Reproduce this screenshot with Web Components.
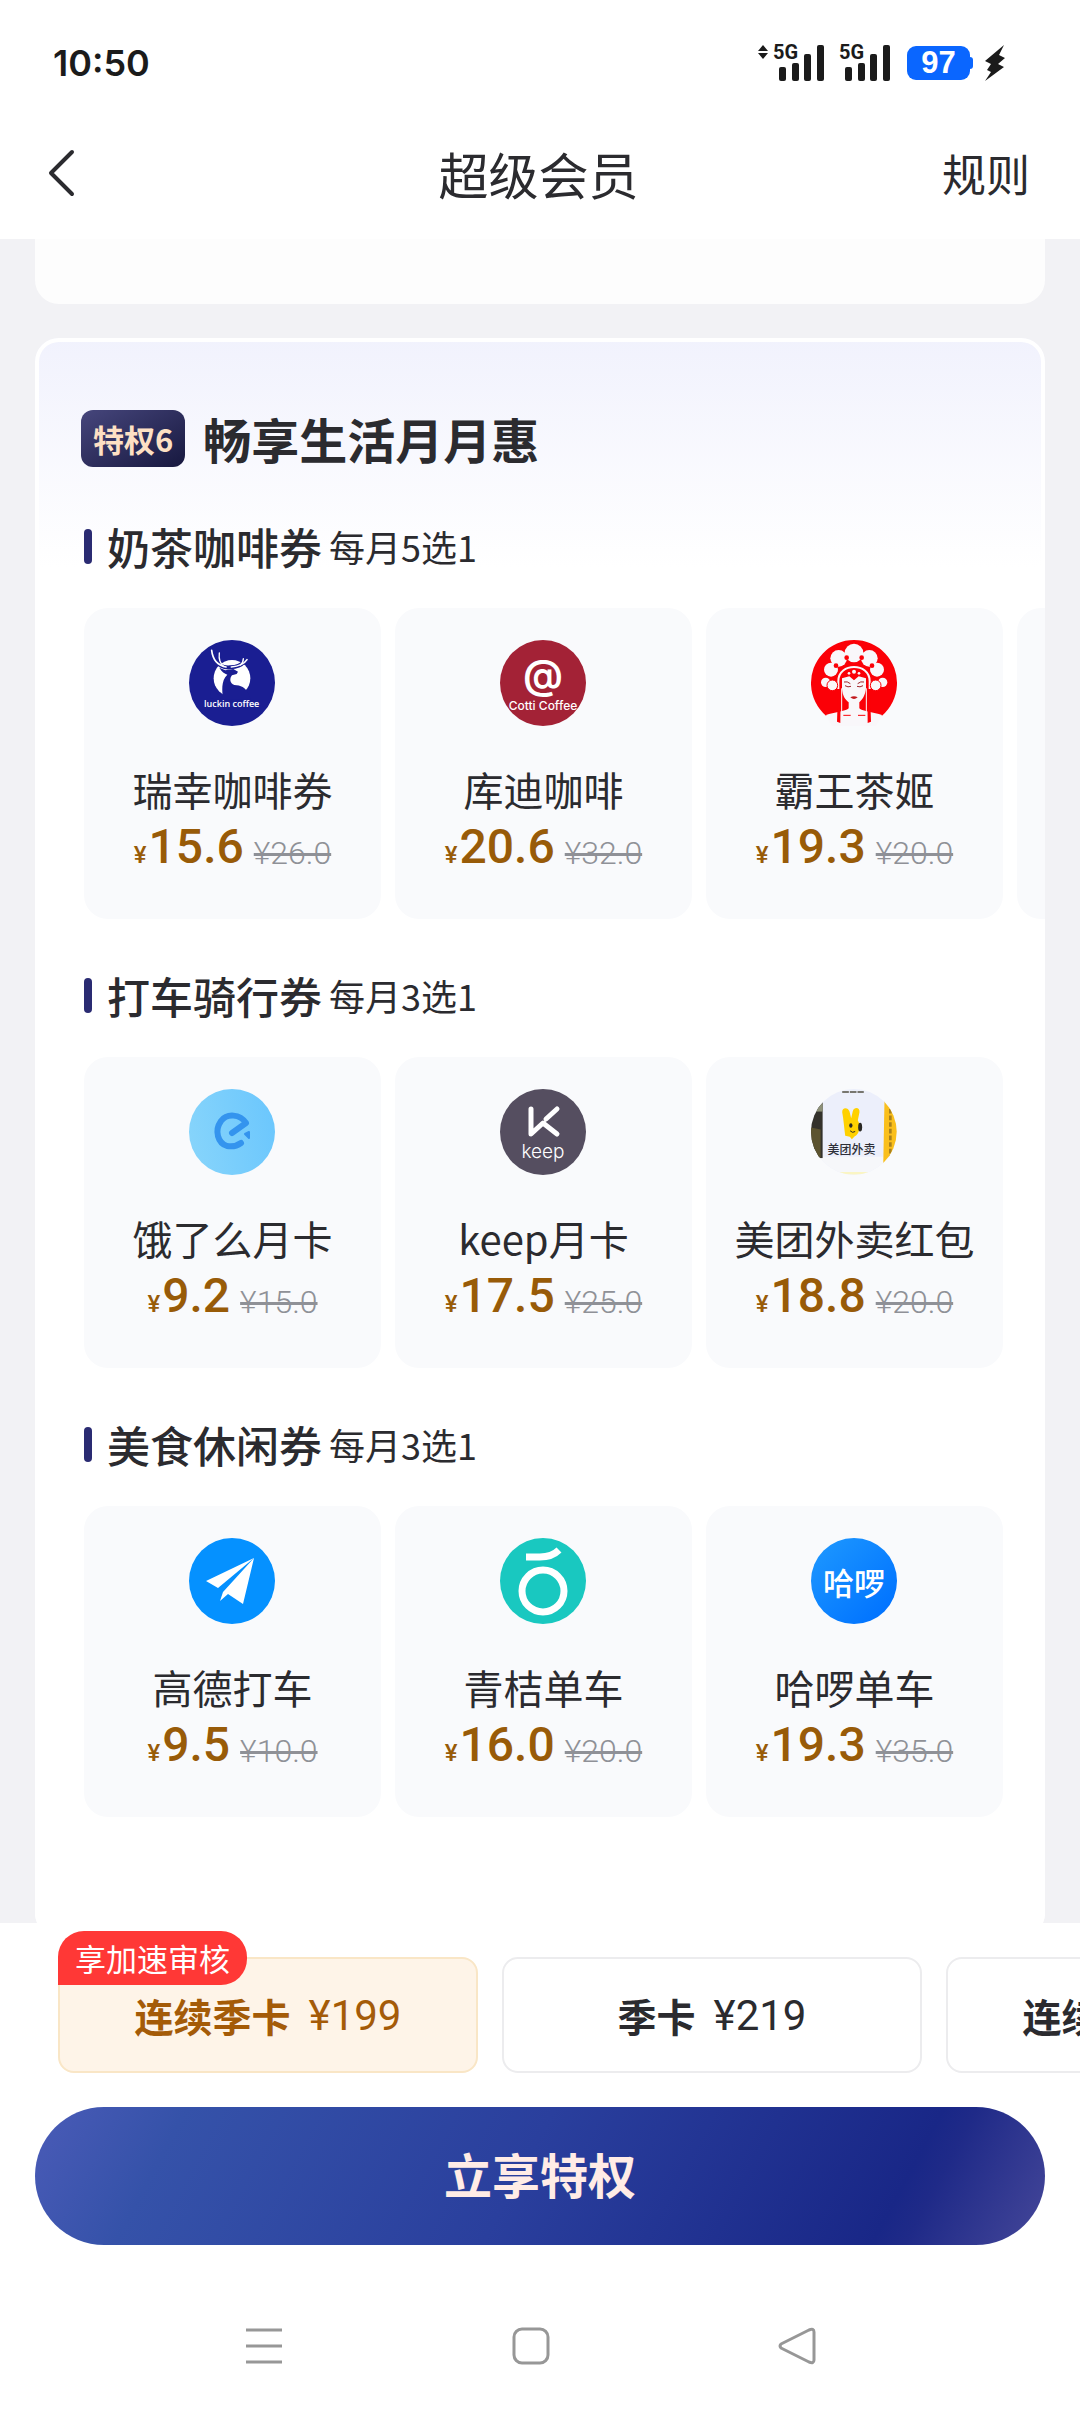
<!DOCTYPE html>
<html lang="zh-CN">
<head>
<meta charset="utf-8">
<meta name="viewport" content="width=device-width, initial-scale=1">
<title>超级会员</title>
<style>
  :root {
    --font-text: "Noto Sans CJK SC", sans-serif;
    --font-number: Roboto, "Noto Sans CJK SC", sans-serif;
    --color-text: #2b2b2f;
    --color-muted: #8f9197;
    --color-gold: #985b08;
    --color-accent: #2a2b72;
    --color-page: #f2f2f5;
    --color-card: #f9fafc;
    --gutter: 35px;
  }

  body {
    margin: 0;
    height: 100vh;
    display: flex;
    flex-direction: column;
    overflow: hidden;
    background: #fff;
    color: var(--color-text);
    font-family: var(--font-text);
  }

  main {
    flex: 1;
    min-height: 0;
    overflow: hidden;
    display: flex;
    flex-direction: column;
    gap: 34px;
    padding: 0 var(--gutter);
    background: var(--color-page);
  }

  .previous-card {
    flex: none;
    height: 65px;
    border-radius: 0 0 24px 24px;
    background: #fdfdfd;
  }
</style>
</head>
<body>
  <status-bar time="10:50" battery="97"></status-bar>
  <page-header>
    超级会员
    <a slot="action" href="#rules">规则</a>
  </page-header>

  <main>
    <div class="previous-card"></div>
    <benefit-panel>
      <span slot="tag">特权6</span>
      <span slot="title">畅享生活月月惠</span>

      <coupon-section label="奶茶咖啡券" note="每月5选1">
        <coupon-card logo="luckin" name="瑞幸咖啡券" price="15.6" was="26.0"></coupon-card>
        <coupon-card logo="cotti" name="库迪咖啡" price="20.6" was="32.0"></coupon-card>
        <coupon-card logo="chagee" name="霸王茶姬" price="19.3" was="20.0"></coupon-card>
        <coupon-card></coupon-card>
      </coupon-section>

      <coupon-section label="打车骑行券" note="每月3选1">
        <coupon-card logo="eleme" name="饿了么月卡" price="9.2" was="15.0"></coupon-card>
        <coupon-card logo="keep" name="keep月卡" price="17.5" was="25.0"></coupon-card>
        <coupon-card logo="meituan" name="美团外卖红包" price="18.8" was="20.0"></coupon-card>
      </coupon-section>

      <coupon-section label="美食休闲券" note="每月3选1">
        <coupon-card logo="amap" name="高德打车" price="9.5" was="10.0"></coupon-card>
        <coupon-card logo="qingju" name="青桔单车" price="16.0" was="20.0"></coupon-card>
        <coupon-card logo="hello" name="哈啰单车" price="19.3" was="35.0"></coupon-card>
      </coupon-section>
    </benefit-panel>
  </main>

  <plan-picker></plan-picker>
  <buy-button>立享特权</buy-button>
  <system-nav></system-nav>

<script>
// Logos, keyed by the coupon-card "logo" attribute
const LOGOS = {
  luckin: `
    <svg viewBox="27 27 258 258" aria-hidden="true">
      <circle cx="156" cy="156" r="129" fill="#1a1e92"/>
      <circle cx="156" cy="142" r="55" fill="#fff"/>
      <path fill="#1a1e92" d="M118 110 L136 118 L160 114 L174 122 L170 129 L156 133 C148 142 149 158 163 162 C182 162 197 170 205 188 L212 205 L129 205 C127 180 122 150 142 131 C134 128 125 122 118 110Z"/>
      <path fill="#1a1e92" d="M97 150 C98 175 110 190 125 196 L120 210 L90 200Z"/>
      <path d="M104 80 C112 104 132 111 151 109 C172 108 184 102 192 92" fill="none" stroke="#1a1e92" stroke-width="12"/>
      <g fill="none" stroke="#fff" stroke-linecap="round">
        <path stroke-width="5" d="M95 58 C98 84 112 103 138 108"/>
        <path stroke-width="4" d="M118 66 C116 82 120 98 132 107"/>
        <path stroke-width="5" d="M154 108 C176 106 192 100 201 86"/>
        <path stroke-width="4" d="M181 102 C188 96 190 90 190 83"/>
      </g>
      <text x="155" y="229" text-anchor="middle" font-family="Open Sans, sans-serif" font-weight="600" font-size="27" fill="#fff">luckin coffee</text>
    </svg>`,

  cotti: `
    <svg viewBox="0 0 86 86" aria-hidden="true">
      <circle cx="43" cy="43" r="43" fill="#a32236"/>
      <text x="43" y="49" text-anchor="middle" font-family="Inter, sans-serif" font-weight="600" font-size="40" fill="#fff">@</text>
      <text x="43" y="70" text-anchor="middle" font-family="Inter, sans-serif" font-weight="500" font-size="12" fill="#fff">Cotti Coffee</text>
    </svg>`,

  chagee: `
    <svg viewBox="27 27 258 258" aria-hidden="true">
      <path fill="#fb0007" d="M72 254 A129 129 0 1 1 240 254 L202 245 V275 H108 V245Z"/>
      <g fill="#f9f7fa">
        <circle cx="156" cy="66" r="28"/>
        <circle cx="110" cy="82" r="25"/>
        <circle cx="202" cy="82" r="25"/>
        <circle cx="87" cy="116" r="21"/>
        <circle cx="225" cy="116" r="21"/>
        <circle cx="71" cy="154" r="14"/>
        <circle cx="242" cy="154" r="14"/>
      </g>
      <path fill="#fb0007" d="M100 178 V150 C100 82 212 82 212 150 V178Z"/>
      <g fill="#fb0007">
        <circle cx="134" cy="80" r="7"/><circle cx="179" cy="80" r="7"/>
        <circle cx="102" cy="104" r="7"/><circle cx="210" cy="104" r="7"/>
      </g>
      <path fill="none" stroke="#f9f7fa" stroke-width="6" d="M109 174 V150 C109 94 203 94 203 150 V174"/>
      <g fill="#f9f7fa" stroke="#fb0007" stroke-width="3">
        <circle cx="91" cy="163" r="16"/><circle cx="221" cy="163" r="16"/>
      </g>
      <path fill="#f9f7fa" d="M120 142 L142 136 L156 148 L170 136 L192 142 V172 C190 194 180 207 172 214 V232 C182 242 216 244 240 252 L222 285 H90 L72 252 C96 244 130 242 140 232 V214 C130 207 121 194 120 172Z"/>
      <g fill="#f9f7fa"><circle cx="156" cy="122" r="6"/><circle cx="141" cy="127" r="4"/><circle cx="171" cy="127" r="4"/></g>
      <path fill="none" stroke="#f9f7fa" stroke-width="3" d="M119 172 V244 M193 172 V244"/>
      <path fill="#fb0007" d="M108 180 L116 180 L115 276 L105 272Z M204 180 L196 180 L197 276 L207 272Z"/>
      <path fill="none" stroke="#a0252a" stroke-width="3" d="M126 153 Q136 150 145 158 M186 153 Q176 150 167 158 M129 164 Q138 170 147 166 M183 164 Q174 170 165 166"/>
      <path fill="#c2181d" d="M145 199 Q156 193 167 199 Q156 209 145 199Z"/>
      <path stroke="#fb0007" stroke-width="3" d="M124 253 H146 M168 253 H190"/>
    </svg>`,

  eleme: `
    <svg viewBox="0 0 86 86" aria-hidden="true">
      <defs><linearGradient id="g" x1="0" y1="0.6" x2="1" y2="0.4">
        <stop offset="0" stop-color="#86d4fb"/><stop offset="1" stop-color="#6cc7fd"/>
      </linearGradient></defs>
      <circle cx="43" cy="43" r="43" fill="url(#g)"/>
      <path d="M43 44 L57 34 C51 25 38 24 32 32 C25 42 29 54 38 57 C44 58 48 57 52 54" fill="none" stroke="#3494ee" stroke-width="6" stroke-linecap="round" stroke-linejoin="round"/>
      <path d="M56 45 l4 -2 v6z" fill="#3494ee" stroke="#3494ee" stroke-width="2" stroke-linejoin="round"/>
    </svg>`,

  keep: `
    <svg viewBox="0 0 86 86" aria-hidden="true">
      <circle cx="43" cy="43" r="43" fill="#554e60"/>
      <path d="M31 20 V45 L43 34 L57 45 M46 30 L57 20" fill="none" stroke="#fff" stroke-width="5" stroke-linecap="round" stroke-linejoin="round"/>
      <text x="43" y="69" text-anchor="middle" font-family="Inter, sans-serif" font-weight="300" font-size="19" fill="#fff">keep</text>
    </svg>`,

  meituan: `
    <svg viewBox="363 146 259 259" aria-hidden="true">
      <defs><clipPath id="c"><circle cx="492" cy="275" r="129"/></clipPath></defs>
      <g clip-path="url(#c)">
        <rect x="363" y="146" width="259" height="259" fill="#eceffb"/>
        <rect x="363" y="350" width="259" height="55" fill="#f6f7fa"/>
        <rect x="363" y="146" width="35" height="208" fill="#34322c"/>
        <rect x="363" y="190" width="35" height="24" fill="#8d9078"/>
        <path fill="#5c5330" d="M363 262 L392 268 V352 H363Z"/>
        <path fill="#fabf1c" d="M585 146 H622 V405 H580Z"/>
        <path stroke="#a9811c" stroke-width="8" stroke-dasharray="14 6" d="M602 206 V350"/>
        <path stroke="#77766f" stroke-width="6" stroke-dasharray="20 3" d="M457 155 H522"/>
        <path stroke="#faf5c4" stroke-width="8" d="M450 400 H540"/>
        <path fill="#ffd100" d="M466 287 C463 262 461 238 457 216 C456 200 475 200 479 214 L484 234 L489 212 C494 198 511 202 509 216 L504 240 C514 258 508 284 494 289 L486 297 L480 290Z"/>
        <ellipse cx="511" cy="261" rx="6" ry="13" fill="#2b2925"/>
        <ellipse cx="483" cy="256" rx="5" ry="7" fill="#2b2925"/>
        <path d="M481 272 Q488 280 496 274" fill="none" stroke="#2b2925" stroke-width="3"/>
        <text x="485" y="342" text-anchor="middle" font-family="Noto Sans CJK SC, sans-serif" font-weight="500" font-size="36" fill="#2e2f38">美团外卖</text>
      </g>
    </svg>`,

  amap: `
    <svg viewBox="0 0 86 86" aria-hidden="true">
      <circle cx="43" cy="43" r="43" fill="#0591ff"/>
      <path fill="#fff" d="M65 20 L17 43 L29 50Z M65 20 L34 54 L31 63 L39 56 L54 66Z"/>
    </svg>`,

  qingju: `
    <svg viewBox="0 0 86 86" aria-hidden="true">
      <circle cx="43" cy="43" r="43" fill="#19c8c0"/>
      <g fill="none" stroke="#fff" stroke-width="7">
        <circle cx="43" cy="53" r="21"/>
        <path d="M26 19 H40 C49 19 54 17 59 12"/>
      </g>
    </svg>`,

  hello: `
    <svg viewBox="0 0 86 86" aria-hidden="true">
      <defs><linearGradient id="g" x1="0" y1="0" x2="1" y2="1">
        <stop offset="0.1" stop-color="#1b95ff"/><stop offset="0.9" stop-color="#0072ff"/>
      </linearGradient></defs>
      <circle cx="43" cy="43" r="43" fill="url(#g)"/>
      <text x="43" y="57" text-anchor="middle" font-family="Noto Sans CJK SC, sans-serif" font-weight="500" font-size="31" fill="#fff">哈啰</text>
    </svg>`,
};

class StatusBar extends HTMLElement {
  constructor() {
    super();
    this.attachShadow({ mode: 'open' });
  }

  connectedCallback() {
    const signal = `
      <svg class="signal" viewBox="0 -8 52 54" aria-hidden="true">
        <g fill="#1b1b1b">
          <rect x="6" y="23" width="7" height="14" rx="2"/>
          <rect x="19" y="19" width="7" height="18" rx="2"/>
          <rect x="31" y="10" width="7" height="27" rx="2"/>
          <rect x="44" y="1" width="7" height="36" rx="2"/>
          <text x="0" y="15" font-family="Roboto, sans-serif" font-weight="700" font-size="20">5G</text>
        </g>
      </svg>`;

    this.shadowRoot.innerHTML = `
      <style>
        :host {
          flex: none;
          display: flex;
          align-items: center;
          height: 126px;
          padding: 0 74px 0 53px;
          color: #1b1b1b;
          font: 600 36px/48px Inter, sans-serif;
        }

        .icons {
          margin-left: auto;
          display: flex;
          align-items: center;
          gap: 14px;
        }

        .arrows { width: 10px; height: 38px; margin-right: -9px; }
        .signal { width: 52px; height: 54px; }

        .battery {
          position: relative;
          width: 63px;
          line-height: 34px;
          margin-left: 2px;
          border-radius: 9px;
          background: #0a66ff;
          color: #fff;
          font-family: "Liberation Sans", sans-serif;
          font-weight: 700;
          font-size: 31px;
          text-align: center;
        }

        .battery::after {
          content: "";
          position: absolute;
          left: 100%;
          top: 11px;
          width: 3px;
          height: 12px;
          border-radius: 0 3px 3px 0;
          background: #0a66ff;
        }

        .bolt { width: 22px; height: 38px; }
      </style>

      <span>${this.getAttribute('time')}</span>
      <div class="icons">
        <svg class="arrows" viewBox="0 0 10 38" aria-hidden="true">
          <path fill="#1b1b1b" d="M5 1 L10 7 H0Z M5 15 L0 9 H10Z"/>
        </svg>
        ${signal}
        ${signal}
        <span class="battery">${this.getAttribute('battery')}</span>
        <svg class="bolt" viewBox="0 0 22 38" aria-hidden="true">
          <path fill="#1b1b1b" d="M20 1 L1 17 L7 20 L3 26 L7 28 L1 37 L20 23 L14 20 L21 14 L15 11Z"/>
        </svg>
      </div>
    `;
  }
}

class PageHeader extends HTMLElement {
  constructor() {
    super();
    this.attachShadow({ mode: 'open' }).innerHTML = `
      <style>
        :host {
          flex: none;
          display: grid;
          grid-template-columns: 1fr auto 1fr;
          align-items: center;
          height: 113px;
          padding: 0 50px 20px 47px;
          box-sizing: border-box;
        }

        button {
          justify-self: start;
          display: flex;
          padding: 0;
          border: 0;
          background: none;
        }

        svg { width: 28px; height: 48px; }

        h1 {
          margin: 0;
          font-size: 50px;
          font-weight: 400;
          line-height: 72px;
        }

        ::slotted(a) {
          justify-self: end;
          color: inherit;
          font-size: 44px;
          line-height: 64px;
          text-decoration: none;
        }
      </style>

      <button type="button" aria-label="返回">
        <svg viewBox="0 0 28 48" fill="none" stroke="#2b2b2f" stroke-width="4" stroke-linecap="round" stroke-linejoin="round" aria-hidden="true">
          <path d="M25 3 L4 24 L25 45"/>
        </svg>
      </button>
      <h1><slot></slot></h1>
      <slot name="action"></slot>
    `;
  }
}

class BenefitPanel extends HTMLElement {
  constructor() {
    super();
    this.attachShadow({ mode: 'open' }).innerHTML = `
      <style>
        :host {
          flex: none;
          display: flex;
          flex-direction: column;
          gap: 48px;
          overflow: hidden;
          padding: 68px 0 120px 46px;
          border-radius: 24px;
          background: linear-gradient(#f1f2fd, #fff 230px);
          box-shadow: inset 0 0 0 4px #fff;
        }

        header {
          display: flex;
          align-items: center;
          gap: 18px;
          height: 64px;
        }

        .tag {
          padding: 0 12px;
          border-radius: 12px;
          background: linear-gradient(150deg, #46467c, #17183f);
          color: #fde0c4;
          font-size: 31px;
          font-weight: 700;
          line-height: 57px;
        }

        h2 {
          margin: 0;
          font-size: 48px;
          font-weight: 700;
          line-height: 64px;
        }
      </style>

      <header>
        <span class="tag"><slot name="tag"></slot></span>
        <h2><slot name="title"></slot></h2>
      </header>
      <slot></slot>
    `;
  }
}

class CouponSection extends HTMLElement {
  constructor() {
    super();
    this.attachShadow({ mode: 'open' });
  }

  connectedCallback() {
    this.shadowRoot.innerHTML = `
      <style>
        :host {
          display: block;
          padding-left: 3px;
        }

        header {
          display: flex;
          align-items: center;
          gap: 7px;
          height: 56px;
          margin-bottom: 34px;
        }

        header::before {
          content: "";
          width: 8px;
          height: 35px;
          margin-right: 8px;
          border-radius: 4px;
          background: var(--color-accent);
        }

        h3 {
          margin: 0;
          font-size: 43px;
          font-weight: 500;
          line-height: 56px;
        }

        .note {
          font-size: 36px;
          line-height: 56px;
        }

        .list {
          display: flex;
          gap: 14px;
          overflow: hidden;
        }
      </style>

      <header>
        <h3>${this.getAttribute('label')}</h3>
        <span class="note">${this.getAttribute('note')}</span>
      </header>
      <div class="list"><slot></slot></div>
    `;
  }
}

class CouponCard extends HTMLElement {
  constructor() {
    super();
    this.attachShadow({ mode: 'open' });
  }

  connectedCallback() {
    const logo = LOGOS[this.getAttribute('logo')];

    this.shadowRoot.innerHTML = `
      <style>
        :host {
          flex: none;
          display: flex;
          flex-direction: column;
          align-items: center;
          width: calc((100% - 70px) / 3);
          min-height: 311px;
          padding-top: 32px;
          box-sizing: border-box;
          border-radius: 24px;
          background: var(--color-card);
        }

        svg {
          width: 86px;
          height: 86px;
        }

        .name {
          margin-top: 35px;
          font-size: 40px;
          line-height: 56px;
          white-space: nowrap;
        }

        .prices {
          display: flex;
          align-items: center;
          gap: 10px;
          font-family: var(--font-number);
          line-height: 60px;
        }

        .now {
          display: flex;
          align-items: baseline;
          gap: 2px;
          color: var(--color-gold);
          font-weight: 500;
        }

        .unit { font-size: 24px; }
        .price { font-size: 48px; }

        del {
          padding-top: 4px;
          color: var(--color-muted);
          font-size: 32px;
          font-weight: 300;
          text-decoration-thickness: 3px;
        }
      </style>

      ${logo ? `
        ${logo}
        <span class="name">${this.getAttribute('name')}</span>
        <div class="prices">
          <span class="now">
            <span class="unit">¥</span>
            <span class="price">${this.getAttribute('price')}</span>
          </span>
          <del>¥${this.getAttribute('was')}</del>
        </div>
      ` : ''}
    `;
  }
}

class PlanPicker extends HTMLElement {
  constructor() {
    super();
    this.attachShadow({ mode: 'open' });
    this.plans = [
      { id: 'quarter-auto', name: '连续季卡', price: '199', badge: '享加速审核' },
      { id: 'quarter', name: '季卡', price: '219' },
      { id: 'year-auto', name: '连续年卡', price: '699' },
    ];
  }

  connectedCallback() {
    this.shadowRoot.innerHTML = `
      <style>
        :host {
          flex: none;
          display: block;
          overflow: hidden;
          background: #fff;
        }

        .list {
          display: flex;
          gap: 24px;
          padding: 34px 0 34px 58px;
        }

        label {
          position: relative;
          flex: none;
          display: flex;
          align-items: center;
          justify-content: center;
          gap: 18px;
          width: calc(50% - 91px);
          height: 116px;
          box-sizing: border-box;
          border: 2px solid #ececee;
          border-radius: 16px;
          font-size: 39px;
          font-weight: 700;
        }

        label:has(input:checked) {
          border-color: #f9e6c6;
          background: #fef4e8;
          color: #a45b08;
        }

        input {
          position: absolute;
          opacity: 0;
        }

        .price {
          font-family: var(--font-number);
          font-size: 42px;
          font-weight: 400;
        }

        .badge {
          position: absolute;
          left: -2px;
          top: -28px;
          padding: 0 17px;
          border-radius: 26px 26px 26px 0;
          background: #ff3836;
          color: #fff;
          font-size: 31px;
          font-weight: 400;
          line-height: 54px;
        }
      </style>

      <div class="list" role="radiogroup" aria-label="会员套餐">
        ${this.plans.map((plan, i) => `
          <label for="${plan.id}">
            <input type="radio" name="plan" id="${plan.id}" ${i === 0 ? 'checked' : ''}>
            ${plan.badge ? `<span class="badge">${plan.badge}</span>` : ''}
            <span>${plan.name}</span>
            <span class="price">¥${plan.price}</span>
          </label>
        `).join('')}
      </div>
    `;
  }
}

class BuyButton extends HTMLElement {
  constructor() {
    super();
    this.attachShadow({ mode: 'open' }).innerHTML = `
      <style>
        :host {
          flex: none;
          display: flex;
          padding: 0 var(--gutter);
        }

        button {
          flex: 1;
          height: 138px;
          padding: 0 0 6px;
          border: 0;
          border-radius: 69px;
          background: linear-gradient(118deg, #4a5bb7, #3552a9 14%, #2a3f9d 48%, #192787 84%, #1f2a88 87%, #454799);
          color: #ffece6;
          font: 700 48px/72px var(--font-text);
        }
      </style>
      <button type="button"><slot></slot></button>
    `;
  }
}

class SystemNav extends HTMLElement {
  constructor() {
    super();
    this.attachShadow({ mode: 'open' }).innerHTML = `
      <style>
        :host {
          flex: none;
          display: flex;
          justify-content: space-between;
          padding: 82px 264px 47px 245px;
        }

        button {
          display: flex;
          padding: 0;
          border: 0;
          background: none;
        }

        svg {
          width: 38px;
          height: 38px;
          fill: none;
          stroke: #979797;
          stroke-width: 3;
          stroke-linejoin: round;
        }
      </style>

      <button type="button" aria-label="最近任务">
        <svg viewBox="0 0 38 38"><path d="M1 3 H37 M1 19 H37 M1 35 H37"/></svg>
      </button>
      <button type="button" aria-label="主页">
        <svg viewBox="0 0 38 38"><rect x="2" y="2" width="34" height="34" rx="8"/></svg>
      </button>
      <button type="button" aria-label="后退">
        <svg viewBox="0 0 38 38"><path d="M3 17 L31 3 Q36 1 36 5 V33 Q36 37 31 35 L3 21 Q1 19 3 17Z"/></svg>
      </button>
    `;
  }
}

customElements.define('status-bar', StatusBar);
customElements.define('page-header', PageHeader);
customElements.define('benefit-panel', BenefitPanel);
customElements.define('coupon-section', CouponSection);
customElements.define('coupon-card', CouponCard);
customElements.define('plan-picker', PlanPicker);
customElements.define('buy-button', BuyButton);
customElements.define('system-nav', SystemNav);
</script>
</body>
</html>
